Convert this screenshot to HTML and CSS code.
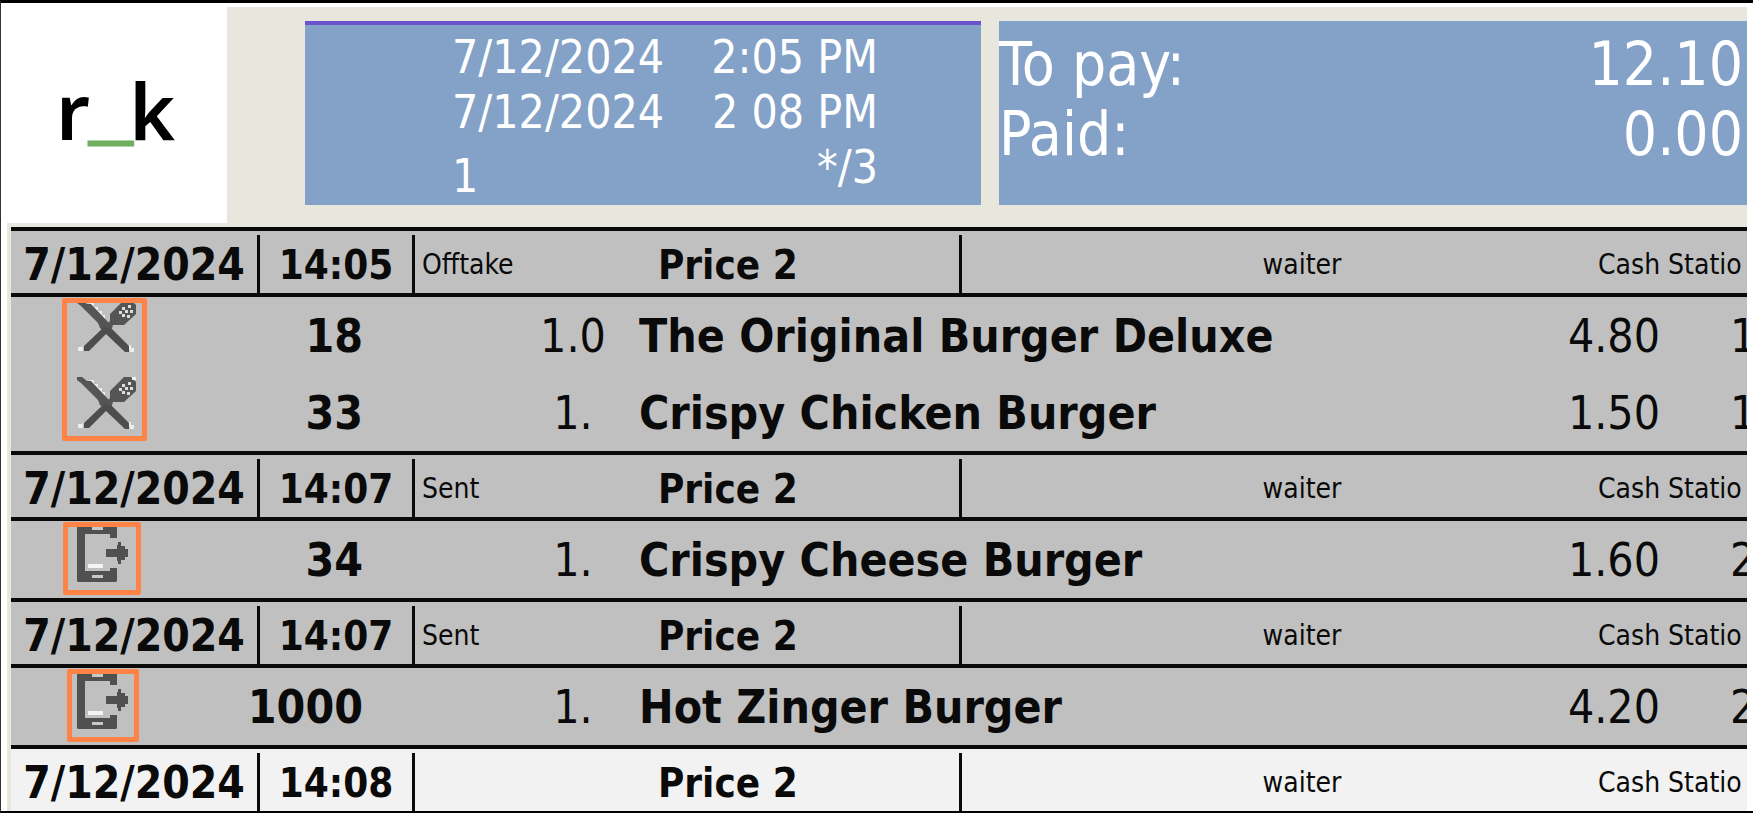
FILE: index.html
```html
<!DOCTYPE html>
<html lang="en">
<head>
    <meta charset="UTF-8">
    <meta name="viewport" content="width=device-width, initial-scale=1.0">
    <title>Order</title>
    <link rel="stylesheet" href="styles.css">
</head>
<body>
    <!-- shared icons -->
    <svg class="defs" width="0" height="0" aria-hidden="true">
        <symbol id="cutlery" viewBox="0 0 60 54">
            <path d="M12 3h5v4h4v4h4v4h3v4h-4zM5 43v4h-4v4h5zM51 45h3v3h3v4h-4z" fill="#eee"/>
            <path d="M0 0h5l5 4 4 0 17 18 5 4-5 9-8-7-2-5-17-17-4-3z" fill="#555"/>
            <path d="M29 25l5 3 18 18v6h-4L29 34 12 51H7v-5z" fill="#4d4d4d"/>
            <path d="M33 14L47 0h7l5 5v9L47 25H36l-5 4-3-3 5-5z" fill="#555"/>
            <path d="M45 7h3v3h-3zM51 5h3v3h-3zM48 10h3v3h-3zM42 11h3v3h-3zM45 14h3v3h-3zM53 10h3v3h-3zM50 15h3v3h-3z" fill="#ddd"/>
            <path d="M55 0h4v3h-4z" fill="#eee"/>
        </symbol>
        <symbol id="phone" viewBox="0 0 52 58">
            <path d="M1 0h39v14h-7v-4H8v37h25v-3h7v13l-1 1H1l-1-1V1z" fill="#505050"/>
            <path d="M15 3h11v3H15zM15 51h11v3H15z" fill="#c8c8c8"/>
            <path d="M11 40h15v4H11z" fill="#f4f4f4"/>
            <path d="M29 25h11v-4h1v-3h3v4h4v3h3v8h-3v3h-4v4h-3v-3h-1v-4H29z" fill="#505050"/>
        </symbol>
    </svg>

    <div class="order">
        <header>
            <div class="logo">r<span>_</span>k</div>
            <div class="panel times">
                <div class="dates">
                    <div>7/12/2024</div>
                    <div>7/12/2024</div>
                    <div class="guests">1</div>
                </div>
                <div class="hours">
                    <div>2:05 PM</div>
                    <div>2 08 PM</div>
                    <div>*/3</div>
                </div>
            </div>
            <div class="panel totals">
                <div class="total"><span>To pay:</span><span>12.10</span></div>
                <div class="total"><span>Paid:</span><span>0.00</span></div>
            </div>
        </header>

        <table>
            <tbody>
                <tr class="head">
                    <td class="date">7/12/2024</td><td class="time">14:05</td><td class="status">Offtake</td><td class="level">Price 2</td><td class="waiter">waiter</td><td class="station">Cash Statio</td>
                </tr>
                <tr class="item first">
                    <td class="icon"><svg width="60" height="54"><use href="#cutlery"/></svg><span class="mark mark-tall"></span></td>
                    <td class="code">18</td><td class="qty">1.0</td><td class="name">The Original Burger Deluxe</td><td class="price">4.80</td><td class="seat">1</td>
                </tr>
                <tr class="item">
                    <td class="icon"><svg width="60" height="54"><use href="#cutlery"/></svg></td>
                    <td class="code">33</td><td class="qty">1.</td><td class="name">Crispy Chicken Burger</td><td class="price">1.50</td><td class="seat">1</td>
                </tr>
            </tbody>
            <tbody>
                <tr class="head">
                    <td class="date">7/12/2024</td><td class="time">14:07</td><td class="status">Sent</td><td class="level">Price 2</td><td class="waiter">waiter</td><td class="station">Cash Statio</td>
                </tr>
                <tr class="item first">
                    <td class="icon"><svg width="52" height="58"><use href="#phone"/></svg><span class="mark"></span></td>
                    <td class="code">34</td><td class="qty">1.</td><td class="name">Crispy Cheese Burger</td><td class="price">1.60</td><td class="seat">2</td>
                </tr>
            </tbody>
            <tbody>
                <tr class="head">
                    <td class="date">7/12/2024</td><td class="time">14:07</td><td class="status">Sent</td><td class="level">Price 2</td><td class="waiter">waiter</td><td class="station">Cash Statio</td>
                </tr>
                <tr class="item first">
                    <td class="icon"><svg width="52" height="58"><use href="#phone"/></svg><span class="mark mark-small"></span></td>
                    <td class="code">1000</td><td class="qty">1.</td><td class="name">Hot Zinger Burger</td><td class="price">4.20</td><td class="seat">2</td>
                </tr>
            </tbody>
            <tbody class="current">
                <tr class="head">
                    <td class="date">7/12/2024</td><td class="time">14:08</td><td class="status"></td><td class="level">Price 2</td><td class="waiter">waiter</td><td class="station">Cash Statio</td>
                </tr>
            </tbody>
        </table>
    </div>
</body>
</html>
```
FILE: styles.css
```css
* {
    box-sizing: border-box;
}
body {
    margin: 0;
    padding: 4px 6px 0;
    border-top: 3px solid #000;
    border-bottom: 2px solid #000;
    border-left: 1px solid #333;
    background-color: #fff;
    color: #0a0a0a;
    font-family: "DejaVu Sans Condensed", "DejaVu Sans", sans-serif;
    font-stretch: condensed;
    overflow-x: hidden;
}
.defs {
    position: absolute;
}
.order {
    background-color: #e7e7de;
}

/* top panels */
header {
    display: flex;
    height: 220px;
}
.logo {
    width: 220px;
    margin-right: 78px;
    padding: 43px 0 0 49px;
    height: 216px;
    background-color: #fff;
    color: #000;
    font: 600 78px/120px "Noto Sans", sans-serif;
    white-space: nowrap;
}
.logo span {
    margin-right: -3px;
    color: #6fae5f;
    font: bold 76px/1 "Liberation Sans", sans-serif;
    vertical-align: 4px;
    -webkit-text-stroke: 3px #6fae5f;
}
.panel {
    height: 184px;
    margin-top: 14px;
    background-color: #84a1c8;
    color: #fff;
}
.times {
    display: flex;
    justify-content: space-between;
    flex: 0 1 676px;
    margin-right: 18px;
    padding: 5px 103px 0 147px;
    border-top: 4px solid #6a53cf;
    font-size: 46px;
    line-height: 55px;
    white-space: nowrap;
}
.hours {
    text-align: right;
}
.guests {
    line-height: 72px;
}
.totals {
    flex: 1;
    padding: 8px 4px 0 0;
    font-size: 60px;
    line-height: 70px;
}
.total {
    display: flex;
    justify-content: space-between;
}

/* order rows */
table {
    display: block;
    margin-left: 4px;
    background-color: #c0c0c0;
}
tbody {
    display: block;
}
tr {
    display: grid;
    white-space: nowrap;
}
td {
    padding: 0;
    overflow: hidden;
}
.head {
    grid-template-columns: 246px 155px 246px 301px 1fr 149px;
    height: 66px;
    padding-top: 4px;
    border-top: 4px solid #0a0a0a;
    font-size: 40px;
    line-height: 60px;
}
.date,
.time,
.level {
    font-weight: bold;
}
.date {
    font-size: 44px;
}
.date,
.time,
.waiter {
    text-align: center;
}
.time,
.status,
.waiter {
    border-left: 3px solid #0a0a0a;
}
.status,
.waiter,
.station {
    font-size: 28px;
}
.status {
    padding-left: 7px;
}
.waiter {
    padding-left: 44px;
}
.item {
    grid-template-columns: 160px 192px 276px 1fr 150px 87px;
    font-size: 46px;
    line-height: 78px;
}
.item.first {
    border-top: 4px solid #0a0a0a;
}
.item td {
    height: 77px;
}
.icon {
    position: relative;
    padding-left: 66px;
    overflow: visible;
}
.item .icon {
    overflow: visible;
}
.icon svg {
    display: block;
    margin-top: 3px;
}
.code,
.name {
    font-weight: bold;
}
.code,
.price {
    text-align: right;
}
.qty {
    padding-left: 144px;
    text-align: center;
}
.seat {
    padding-left: 70px;
}
.current {
    background-color: #f2f2f2;
}

/* orange frames round the status icons */
.mark {
    position: absolute;
    z-index: 1;
    top: 1px;
    left: 52px;
    width: 78px;
    height: 73px;
    border: 5px solid #ff8246;
    border-radius: 2px;
}
.mark-tall {
    left: 51px;
    width: 85px;
    height: 143px;
}
.mark-small {
    left: 56px;
    width: 72px;
}
```
